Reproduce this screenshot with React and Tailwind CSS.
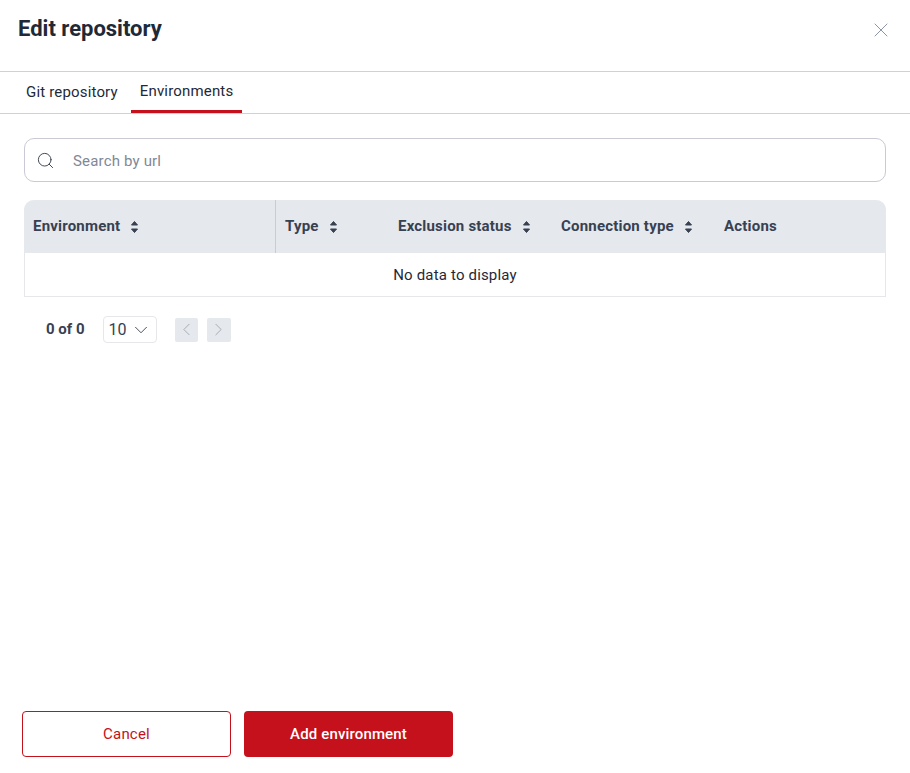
import { ChevronDown, ChevronLeft, ChevronRight, Search, X } from "lucide-react";

const columns = [
  { label: "Environment", width: "w-[252px]", divider: true, sort: true },
  { label: "Type", width: "w-[113px]", sort: true },
  { label: "Exclusion status", width: "w-[163px]", sort: true },
  { label: "Connection type", width: "w-[163px]", sort: true },
  { label: "Actions", width: "flex-1" },
];

const SortIcon = () => (
  <svg width="9" height="14" viewBox="0 0 9 14" className="text-[#374151]">
    <path d="M4.5 1.5 L7.5 5 H1.5 Z" fill="currentColor" stroke="currentColor" strokeWidth="1" strokeLinejoin="round" />
    <path d="M4.5 12.5 L7.5 9 H1.5 Z" fill="currentColor" stroke="currentColor" strokeWidth="1" strokeLinejoin="round" />
  </svg>
);

export default function App() {
  return (
    <div className="flex h-[773px] w-[910px] flex-col bg-white font-['Roboto',sans-serif] text-[#1f2937]">
      <div className="flex h-[72px] shrink-0 items-start justify-between border-b border-[#d1d0d9] pl-[18px] pr-[17px]">
        <h1 className="mt-[14px] text-[22px] leading-[30px] font-bold text-[#1f2937]">Edit repository</h1>
        <button className="mt-[18px] text-[#8b95a5]">
          <X size={24} strokeWidth={1} />
        </button>
      </div>

      <div className="flex h-[42px] shrink-0 border-b border-[#d1d0d9] pl-[13px]">
        <button className="h-[41px] pl-[13px] pr-[13px] text-[15px] tracking-[0.17px]">Git repository</button>
        <button className="h-[41px] border-b-[3px] border-[#c4111c] px-[9px] text-[15px] tracking-[0.17px]">Environments</button>
      </div>

      <div className="flex flex-1 flex-col px-[24px] pt-[24px]">
        <div className="flex h-[44px] items-center rounded-[10px] border border-[#c9cad3] pl-[11px]">
          <Search size={19} strokeWidth={1.2} className="text-[#374151]" />
          <span className="ml-[18px] pt-[2px] text-[15px] tracking-[0.17px] text-[#7f8896]">Search by url</span>
        </div>

        <div className="mt-[18px] rounded-t-[10px] border-x border-b border-[#e5e7eb]">
          <div className="-mx-px flex h-[53px] items-center rounded-t-[10px] bg-[#e5e8ed]">
            {columns.map((col) => (
              <div
                key={col.label}
                className={`flex h-full items-center gap-[10px] pl-[9px] text-[15px] font-bold tracking-[0.2px] text-[#374151] ${col.width} ${col.divider ? "border-r border-[#c9ccd4]" : ""}`}
              >
                <span>{col.label}</span>
                {col.sort && <SortIcon />}
              </div>
            ))}
          </div>
          <div className="flex h-[43px] items-center justify-center pt-px text-[15px] tracking-[0.17px]">No data to display</div>
        </div>

        <div className="mt-[19px] flex items-center pl-[22px]">
          <span className="text-[15px] font-bold text-[#374151]">0 of 0</span>
          <div className="ml-[18px] flex h-[27px] w-[54px] items-center rounded-[4px] border border-[#e5e7eb] pl-[5px] text-[16px] text-[#374151]">
            10
            <ChevronDown size={22} strokeWidth={1} className="ml-[3px]" />
          </div>
          <button className="ml-[18px] flex h-[24px] w-[23px] items-center justify-center rounded-[2px] bg-[#e5e8ed] text-[#9ca3af]">
            <ChevronLeft size={21} strokeWidth={1} />
          </button>
          <button className="ml-[9px] flex h-[24px] w-[24px] items-center justify-center rounded-[2px] bg-[#e5e8ed] text-[#9ca3af]">
            <ChevronRight size={21} strokeWidth={1} />
          </button>
        </div>
      </div>

      <div className="flex gap-[13px] pb-[16px] pl-[22px]">
        <button className="h-[46px] w-[209px] rounded-[4px] border border-[#c4111c] bg-white text-[15px] tracking-[0.2px] text-[#c4111c]">Cancel</button>
        <button className="h-[46px] w-[209px] rounded-[4px] bg-[#c4111c] text-[15px] font-medium tracking-[0.15px] text-white">Add environment</button>
      </div>
    </div>
  );
}
